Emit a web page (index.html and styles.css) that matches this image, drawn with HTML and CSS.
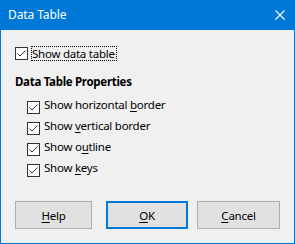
FILE: index.html
```html
<!DOCTYPE html>
<html lang="en">
<head>
  <meta charset="UTF-8" />
  <title>Data Table</title>
  <link rel="stylesheet" href="styles.css">
</head>
<body>
  <div class="window">
    <div class="titlebar">
      <span class="title">Data Table</span>
      <svg class="close" width="10" height="10" viewBox="0 0 10 10">
        <path d="M0.5 0.5 L9.5 9.5 M9.5 0.5 L0.5 9.5" stroke="#fff" stroke-width="1.1" fill="none"/>
      </svg>
    </div>

    <div class="content">
      <label class="check main-check">
        <span class="box">
          <svg width="11" height="11" viewBox="0 0 11 11"><path d="M1.5 5.5 L4 8 L9.5 2.5" stroke="#333" stroke-width="1" fill="none"/></svg>
        </span>
        <span class="label focused">Show data table</span>
      </label>

      <div class="heading">Data Table Properties</div>

      <div class="group">
        <label class="check">
          <span class="box">
            <svg width="11" height="11" viewBox="0 0 11 11"><path d="M1.5 5.5 L4 8 L9.5 2.5" stroke="#333" stroke-width="1" fill="none"/></svg>
          </span>
          <span class="label">Show horizontal <u>b</u>order</span>
        </label>
        <label class="check">
          <span class="box">
            <svg width="11" height="11" viewBox="0 0 11 11"><path d="M1.5 5.5 L4 8 L9.5 2.5" stroke="#333" stroke-width="1" fill="none"/></svg>
          </span>
          <span class="label">Show <u>v</u>ertical border</span>
        </label>
        <label class="check">
          <span class="box">
            <svg width="11" height="11" viewBox="0 0 11 11"><path d="M1.5 5.5 L4 8 L9.5 2.5" stroke="#333" stroke-width="1" fill="none"/></svg>
          </span>
          <span class="label">Show o<u>u</u>tline</span>
        </label>
        <label class="check">
          <span class="box">
            <svg width="11" height="11" viewBox="0 0 11 11"><path d="M1.5 5.5 L4 8 L9.5 2.5" stroke="#333" stroke-width="1" fill="none"/></svg>
          </span>
          <span class="label">Show <u>k</u>eys</span>
        </label>
      </div>

      <div class="buttons">
        <button class="btn btn-help"><u>H</u>elp</button>
        <button class="btn btn-ok default"><u>O</u>K</button>
        <button class="btn btn-cancel"><u>C</u>ancel</button>
      </div>
    </div>
  </div>
</body>
</html>
```

FILE: styles.css
```css
html, body {
  margin: 0;
  padding: 0;
  background: #f0f0f0;
}

body {
  font-family: "Noto Sans", "Open Sans", sans-serif;
  font-size: 11.5px;
  letter-spacing: -0.25px;
  color: #000;
}

.window {
  width: 295px;
  height: 244px;
  box-sizing: border-box;
  border: 1px solid #0078d7;
  border-top: none;
  background: #f0f0f0;
  display: flex;
  flex-direction: column;
}

.titlebar {
  height: 30px;
  background: #0078d7;
  color: #fff;
  display: flex;
  align-items: center;
  justify-content: space-between;
  padding: 0 10px 0 8px;
  margin: 0 -1px;
  flex-shrink: 0;
}

.title {
  font-size: 12px;
  letter-spacing: -0.1px;
  line-height: 16px;
  margin-top: -1px;
}

.close {
  display: block;
  margin-top: -1px;
}

.content {
  padding: 16px 0 0 14px;
  display: flex;
  flex-direction: column;
}

.check {
  display: flex;
  align-items: flex-start;
  height: 21px;
}

.box {
  width: 13px;
  height: 13px;
  box-sizing: border-box;
  border: 1px solid #333;
  background: #fff;
  margin-top: 4px;
  display: flex;
}

.box svg {
  display: block;
}

.check .label {
  margin-left: 4px;
  line-height: 15px;
}

.main-check {
  height: 15px;
}

.main-check .box {
  margin-top: 1px;
}

.main-check .label {
  margin-left: 3px;
  line-height: 13px;
  border: 1px dotted #000;
  padding: 0 1px 0 0;
}

.heading {
  font-weight: bold;
  letter-spacing: -0.3px;
  line-height: 16px;
  margin-top: 13px;
}

.group {
  margin-top: 7px;
  padding-left: 12px;
}

.buttons {
  display: flex;
  margin-top: 20px;
}

.btn {
  font-family: inherit;
  font-size: 11.5px;
  letter-spacing: -0.25px;
  color: #000;
  height: 28px;
  background: #e1e1e1;
  border: 1px solid #adadad;
  padding: 0;
  margin: 0;
  box-sizing: border-box;
}

.btn-help {
  width: 77px;
}

.btn-ok {
  width: 82px;
  margin-left: 14px;
}

.btn-cancel {
  width: 83px;
  margin-left: 9px;
}

.default {
  border: 2px solid #0078d7;
}

u {
  text-underline-offset: 2px;
}
```
